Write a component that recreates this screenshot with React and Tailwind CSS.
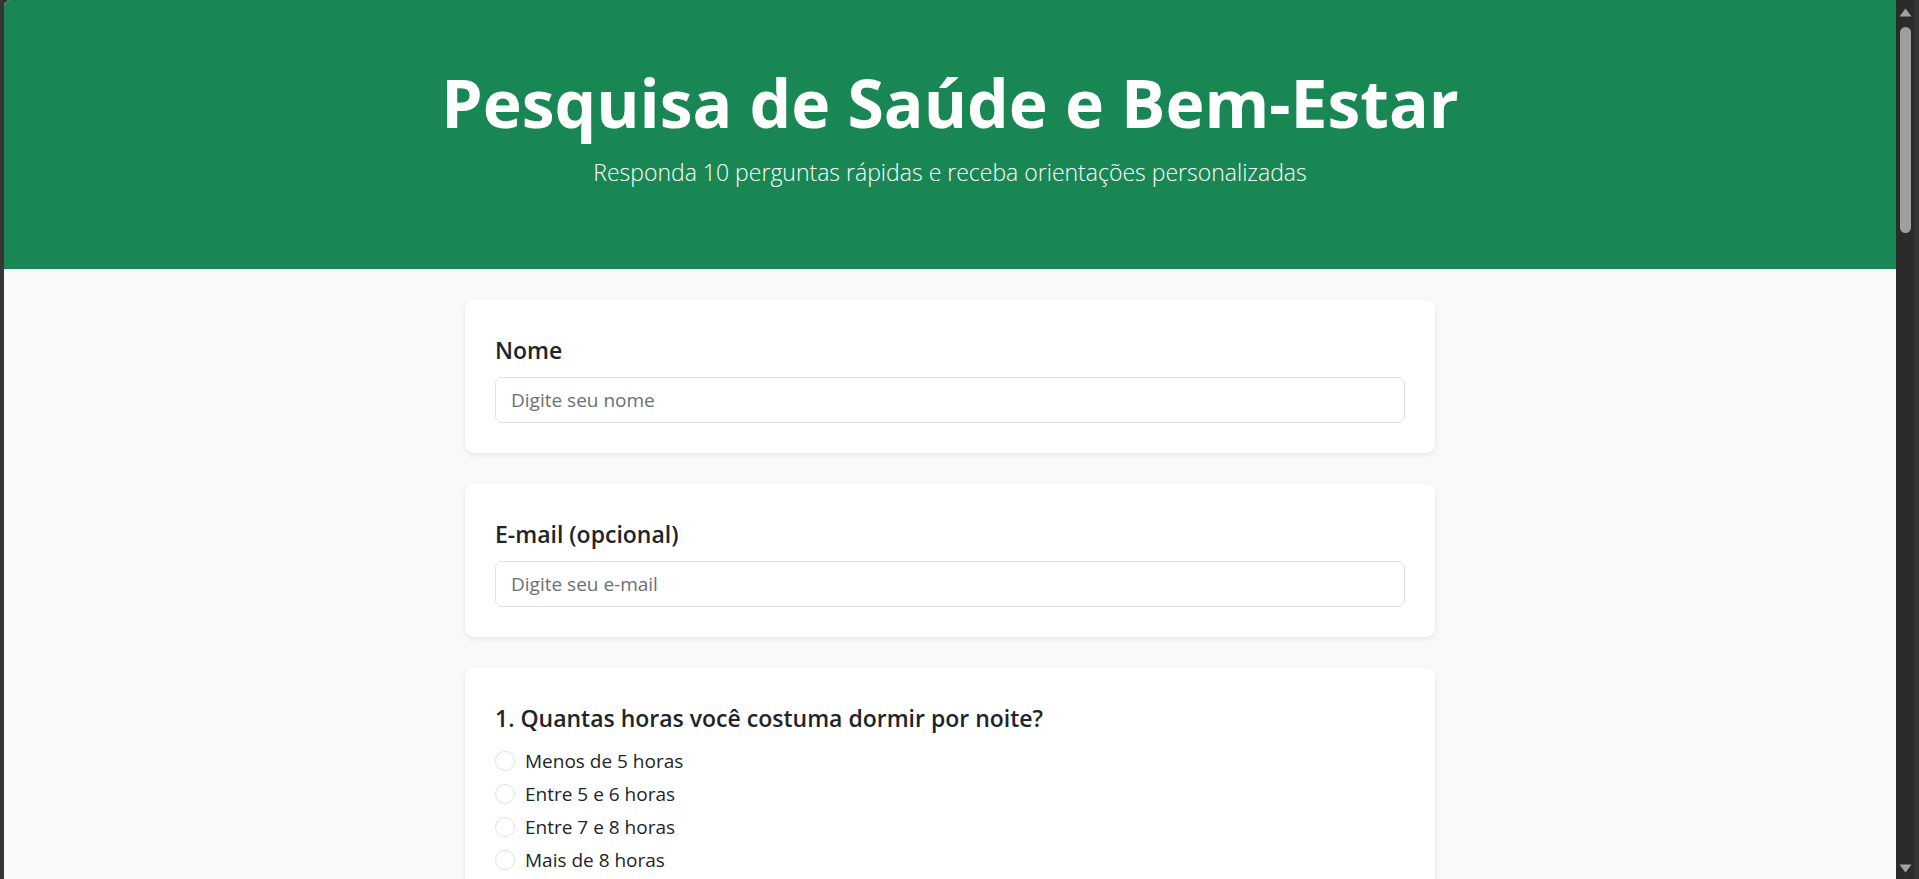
import React, { useState } from 'react';

const QUESTIONS = [
  {
    id: 'sono',
    title: '1. Quantas horas você costuma dormir por noite?',
    options: ['Menos de 5 horas', 'Entre 5 e 6 horas', 'Entre 7 e 8 horas', 'Mais de 8 horas'],
  },
];

function Card({ children }) {
  return (
    <div className="bg-white rounded-[9px] shadow-[0_2px_5px_rgba(0,0,0,0.08)] p-[30px]">
      {children}
    </div>
  );
}

function Label({ children, htmlFor }) {
  return (
    <label htmlFor={htmlFor} className="block text-[23px] font-semibold leading-[37px] pt-[2px] mb-[8px] text-[#212529]">
      {children}
    </label>
  );
}

function TextField({ id, placeholder, type = 'text', value, onChange }) {
  return (
    <input
      id={id} type={type} value={value} onChange={onChange} placeholder={placeholder}
      className="block w-full h-[46px] border border-[#dee2e6] rounded-[7px] px-[15px] text-[19px] text-[#212529] placeholder:text-[#6c7075] outline-none"
    />
  );
}

function Scrollbar() {
  return (
    <div className="w-[18px] bg-[#2b2b2b] flex flex-col items-center">
      <svg width="13" height="9" viewBox="0 0 13 9" className="mt-[8px]">
        <path d="M6.5 0.5 L12.5 8.5 L0.5 8.5 Z" fill="#a3a3a3" />
      </svg>
      <div className="w-[11px] h-[206px] mt-[10px] rounded-full bg-[#9f9f9f]" />
      <div className="flex-1" />
      <svg width="13" height="9" viewBox="0 0 13 9" className="mb-[6px]">
        <path d="M0.5 0.5 L12.5 0.5 L6.5 8.5 Z" fill="#a3a3a3" />
      </svg>
    </div>
  );
}

export default function App() {
  const [nome, setNome] = useState('');
  const [email, setEmail] = useState('');
  const [answers, setAnswers] = useState({});

  return (
    <div className="h-[879px] w-full flex overflow-hidden bg-[#2b2b2b] font-['Open_Sans',sans-serif]">
      <div className="w-[4px] bg-[#363636]" />
      <div className="flex-1 bg-[#f8f9fa] overflow-hidden rounded-tl-[6px]">
        <header className="bg-[#198754] text-white text-center pt-[60px] pb-[78px]">
          <h1 className="text-[66px] font-bold leading-[84px] mb-[10px]">Pesquisa de Saúde e Bem-Estar</h1>
          <p className="text-[23px] font-light leading-[37px]">
            Responda 10 perguntas rápidas e receba orientações personalizadas
          </p>
        </header>

        <main className="max-w-[970px] mx-auto pt-[31px] flex flex-col gap-[31px]">
          <Card>
            <Label htmlFor="nome">Nome</Label>
            <TextField id="nome" placeholder="Digite seu nome" value={nome} onChange={e => setNome(e.target.value)} />
          </Card>

          <Card>
            <Label htmlFor="email">E-mail (opcional)</Label>
            <TextField id="email" type="email" placeholder="Digite seu e-mail" value={email} onChange={e => setEmail(e.target.value)} />
          </Card>

          {QUESTIONS.map(q => (
            <Card key={q.id}>
              <Label>{q.title}</Label>
              <div className="pt-[1px]">
                {q.options.map(opt => (
                  <label key={opt} className="flex items-center h-[30px] mb-[3px] text-[19px] text-[#212529]">
                    <input
                      type="radio" name={q.id} checked={answers[q.id] === opt}
                      onChange={() => setAnswers({ ...answers, [q.id]: opt })}
                      className="appearance-none w-[20px] h-[20px] rounded-full border border-[#dee2e6] bg-white shrink-0 mr-[10px]"
                    />
                    {opt}
                  </label>
                ))}
              </div>
            </Card>
          ))}
        </main>
      </div>
      <Scrollbar />
      <div className="w-[5px] bg-[#333333]" />
    </div>
  );
}
